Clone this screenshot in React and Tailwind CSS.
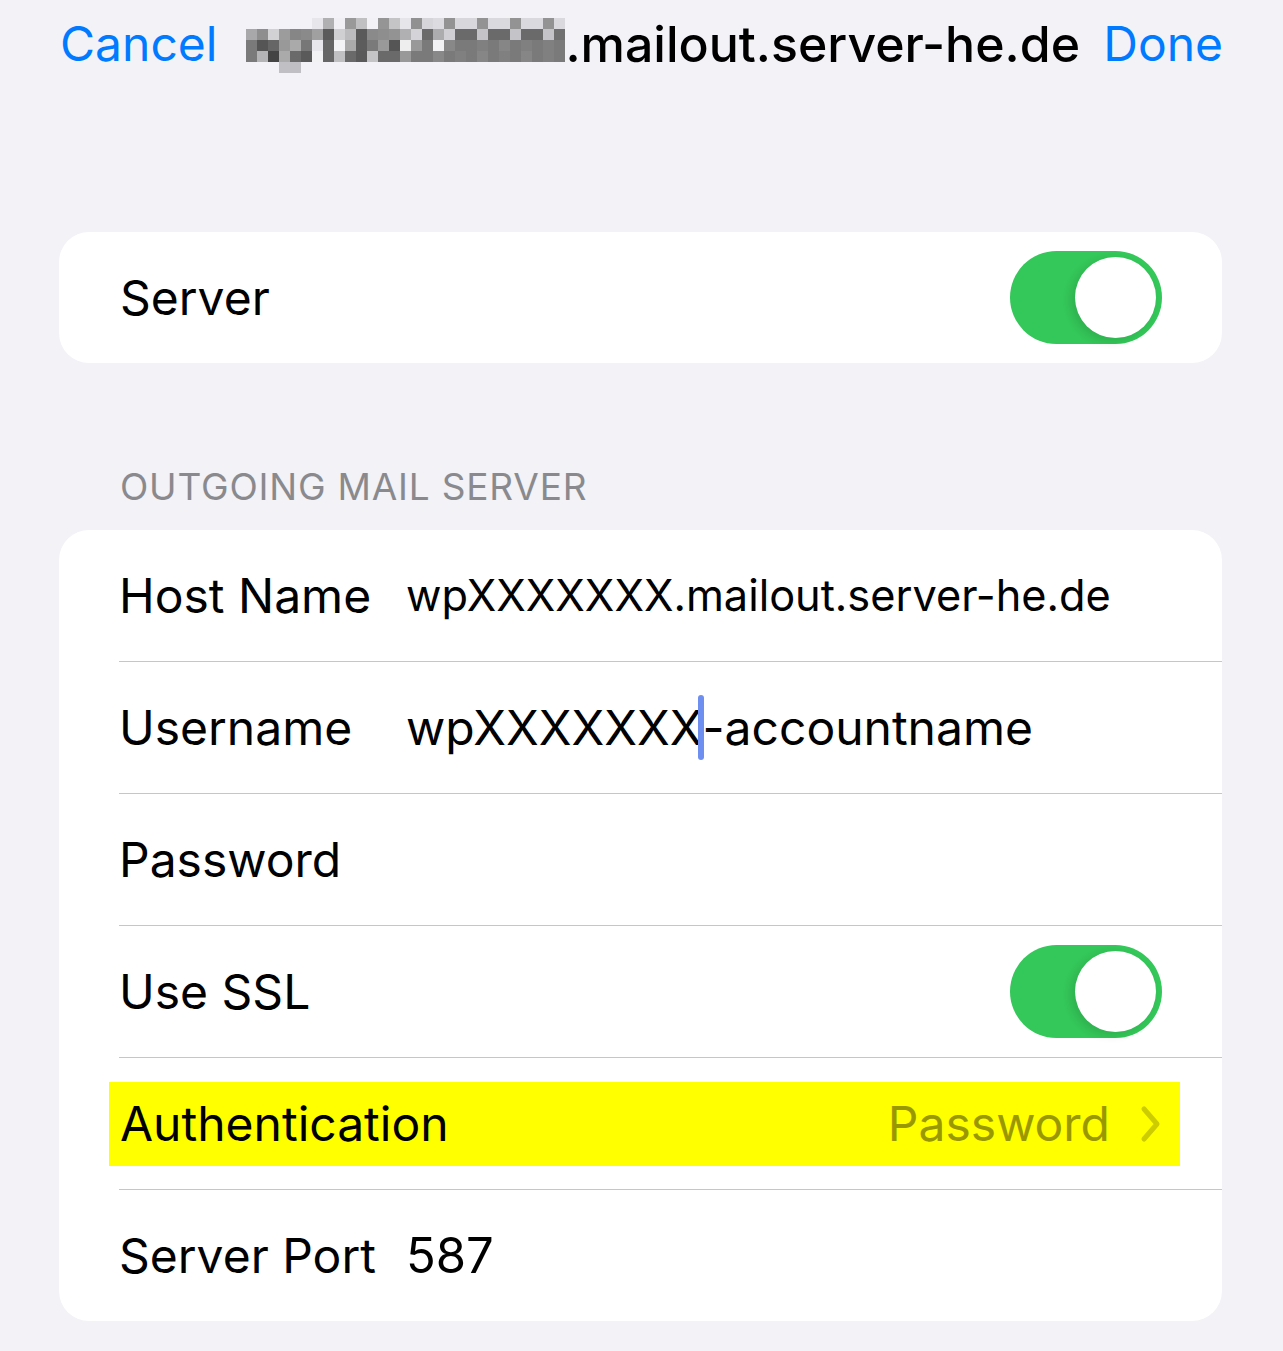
import React from "react";

const N = null;
const MOSAIC = [
  [N, N, N, N, N, N, "e6e6eb", "b0b0b2", "f0f0f4", "999999", "c0c0c2", "f2f2f6", "959595", "c4c4c6", "e6e6ea", "919191", "d6d6da", "dcdce0", "939393", "d8d8dc", "d8d8dc", "939393", "dadade", "dadade", "939393", "dadade", "dadade", "939393", "dadade"],
  ["a8a8aa", "8e8e8e", "d2d2d4", "9c9c9c", "868686", "8a8a8a", "a0a0a0", "5a5a5a", "d0d0d2", "bcbcbe", "5a5a5a", "8a8a8a", "8e8e8e", "939393", "b0b0b2", "d4d4d8", "6a6a6a", "acacae", "d0d0d4", "6a6a6a", "6a6a6a", "c4c4c8", "6a6a6a", "6a6a6a", "c4c4c8", "6a6a6a", "6a6a6a", "c4c4c8", "707070"],
  ["7a7a7a", "555555", "666666", "999999", "aaaaaa", "777777", "e8e8ec", "666666", "f4f4f6", "aaaaaa", "5c5c5c", "7a7a7a", "999999", "555555", "eeeeef", "999999", "7a7a7a", "f2f2f4", "888888", "7a7a7a", "7a7a7a", "808080", "7a7a7a", "868686", "7a7a7a", "808080", "7a7a7a", "808080", "7a7a7a"],
  ["7a7a7a", "b4b4b6", "444444", "aaaaaa", "6a6a6a", "5a5a5a", "f2f2f4", "666666", "c0c0c2", "6a6a6a", "5a5a5a", "c4c4c6", "6a6a6a", "6a6a6a", "999999", "7a7a7a", "7a7a7a", "888888", "7a7a7a", "808080", "7a7a7a", "868686", "7a7a7a", "808080", "7a7a7a", "868686", "7a7a7a", "808080", "7a7a7a"],
  [N, N, N, "c0c0c4", "c0c0c4", N, N, N, N, N, N, N, N, N, N, N, N, N, N, N, N, N, N, N, N, N, N, N, N],
];

function Mosaic() {
  return (
    <div className="grid grid-cols-[repeat(29,11px)] grid-rows-[repeat(5,11px)] mt-[3px] ml-[29px] shrink-0">
      {MOSAIC.flatMap((row, r) =>
        row.map((c, i) => (
          <div key={r + "-" + i} style={c ? { backgroundColor: "#" + c } : undefined} />
        ))
      )}
    </div>
  );
}

function Toggle() {
  return (
    <div className="w-[152px] h-[93px] rounded-full bg-[#34c759] flex items-center justify-end pr-[6px] shrink-0">
      <div className="w-[81px] h-[81px] rounded-full bg-white shadow-[-4px_3px_10px_rgba(0,0,0,0.12)]" />
    </div>
  );
}

function Sep() {
  return <div className="ml-[60px] h-px bg-[#c6c6c8]" />;
}

function Row({ label, children, right }) {
  return (
    <div className="h-[131px] flex items-center pl-[60px] pr-[60px]">
      <div className="w-[287px] shrink-0 text-[48px] leading-none text-black">{label}</div>
      <div className="flex-1 flex items-center">{children}</div>
      {right}
    </div>
  );
}

export default function App() {
  return (
    <div
      className="w-[1283px] h-[1351px] bg-[#f2f2f7] overflow-hidden"
      style={{ fontFamily: "Inter, 'Noto Sans', sans-serif" }}
    >
      {/* Nav */}
      <div className="h-[88px] flex items-center pl-[60px] pr-[60px]">
        <span className="text-[48px] leading-none text-[#007aff]">Cancel</span>
        <Mosaic />
        <span className="text-[50px] leading-none font-medium text-black">.mailout.server-he.de</span>
        <span className="ml-auto text-[48px] leading-none text-[#007aff]">Done</span>
      </div>

      {/* Card 1 */}
      <div className="mt-[144px] ml-[59px] w-[1163px] bg-white rounded-[30px] h-[131px] flex items-center justify-between pl-[61px] pr-[60px]">
        <span className="text-[48px] leading-none text-black">Server</span>
        <Toggle />
      </div>

      {/* Section header */}
      <div className="h-[167px] flex items-end pb-[25px] pl-[120px]">
        <span className="text-[37px] leading-none text-[#8a8a8e] tracking-[0.8px]">OUTGOING MAIL SERVER</span>
      </div>

      {/* Card 2 */}
      <div className="ml-[59px] w-[1163px] bg-white rounded-[30px] overflow-hidden">
        <Row label="Host Name">
          <span className="text-[43.3px] leading-none text-black">wpXXXXXXX.mailout.server-he.de</span>
        </Row>
        <Sep />
        <Row label="Username">
          <span className="text-[48px] leading-none text-black">
            wpXXXXXXX
            <span className="relative inline-block w-0 h-0">
              <span className="absolute left-[-5px] top-[-50px] w-[6px] h-[65px] rounded-full bg-[#6f8ff0]" />
            </span>
            -accountname
          </span>
        </Row>
        <Sep />
        <Row label="Password" />
        <Sep />
        <Row label="Use SSL" right={<Toggle />} />
        <Sep />
        <div className="h-[131px] flex items-center">
          <div className="ml-[50px] w-[1071px] h-[84px] bg-[#ffff00] flex items-center justify-between pl-[11px] pr-[18px]">
            <span className="text-[48px] leading-none text-black">Authentication</span>
            <div className="flex items-center gap-[30px]">
              <span className="text-[48px] leading-none text-[#9a9800]">Password</span>
              <svg width="22" height="38" viewBox="0 0 22 38" fill="none">
                <path d="M4 4 L17 19 L4 34" stroke="#cccc00" strokeWidth="5" strokeLinecap="round" strokeLinejoin="round" />
              </svg>
            </div>
          </div>
        </div>
        <Sep />
        <Row label="Server Port">
          <span className="text-[49px] leading-none text-black">587</span>
        </Row>
      </div>
    </div>
  );
}
